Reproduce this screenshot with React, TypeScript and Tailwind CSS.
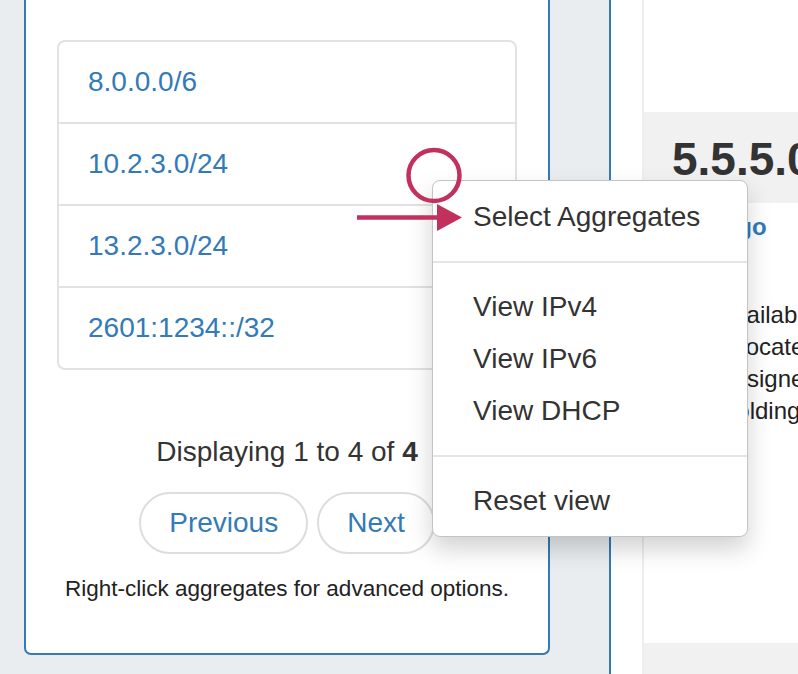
import React from "react";

const aggregates = ["8.0.0.0/6", "10.2.3.0/24", "13.2.3.0/24", "2601:1234::/32"];

const statuses = ["Available", "Allocated", "Assigned", "Holding"];

const MenuItem: React.FC<{ label: string }> = ({ label }) => (
  <div className="h-[52px] pl-[40px] flex items-center text-[28px] leading-[40px] text-[#333]">
    {label}
  </div>
);

const Divider = () => <div className="my-[18px] h-[2px] bg-[#e5e5e5]" />;

const App: React.FC = () => {
  return (
    <div className="relative w-[798px] h-[674px] overflow-hidden bg-[#e9edf0] flex font-['Liberation_Sans',Arial,sans-serif]">
      {/* left panel */}
      <div className="ml-[24px] w-[526px] h-[655px] shrink-0 bg-white border-2 border-t-0 border-[#337ab7] rounded-b-[7px] px-[31px] pt-[40px] flex flex-col items-center">
        <div className="w-full border-2 border-[#e2e2e2] rounded-[8px] divide-y-2 divide-[#e2e2e2]">
          {aggregates.map((a) => (
            <div key={a} className="box-content h-[80px] flex items-center px-[29px] text-[28px] text-[#337ab7]">
              {a}
            </div>
          ))}
        </div>

        <p className="mt-[62px] text-[28px] leading-[40px] text-[#333]">
          Displaying 1 to 4 of <b>4</b>
        </p>

        <div className="mt-[20px] flex gap-[9px]">
          <button className="border-2 border-[#ddd] rounded-full bg-white px-[28px] h-[62px] text-[28px] leading-[40px] text-[#337ab7]">
            Previous
          </button>
          <button className="border-2 border-[#ddd] rounded-full bg-white px-[28px] h-[62px] text-[28px] leading-[40px] text-[#337ab7]">
            Next
          </button>
        </div>

        <p className="mt-[19px] text-[22.5px] leading-[31px] text-[#222]">
          Right-click aggregates for advanced options.
        </p>
      </div>

      {/* right panel */}
      <div className="ml-[59px] flex-1 h-full bg-white border-l-2 border-[#337ab7] pl-[31px] flex">
        <div className="w-[300px] shrink-0 border-l-2 border-[#eeeeee] flex flex-col whitespace-nowrap">
          <div className="h-[112px] shrink-0" />
          <div className="h-[91px] shrink-0 bg-[#f1f1f1] pl-[28px] pt-[22px]">
            <h2 className="text-[46px] leading-[50px] font-bold text-[#333]">5.5.5.0/24</h2>
          </div>
          <div className="h-[440px] shrink-0 pl-[28px]">
            <a className="block mt-[8px] text-[24px] leading-[32px] font-bold text-[#337ab7]">Chicago</a>
            <div className="mt-[56px] pl-[47px] text-[24px] leading-[32px] text-[#222]">
              {statuses.map((s) => (
                <div key={s}>{s}</div>
              ))}
            </div>
          </div>
          <div className="flex-1 bg-[#f1f1f1] pl-[28px] pt-[22px]">
            <h2 className="text-[46px] leading-[50px] font-bold text-[#333]">7.8.8.0/24</h2>
          </div>
        </div>
      </div>

      {/* context menu */}
      <div className="absolute left-[432px] top-[180px] w-[316px] h-[357px] bg-white border border-[#c4c4c4] rounded-[8px] py-[10px] shadow-[0_12px_24px_rgba(0,0,0,0.18)]">
        <MenuItem label="Select Aggregates" />
        <Divider />
        <MenuItem label="View IPv4" />
        <MenuItem label="View IPv6" />
        <MenuItem label="View DHCP" />
        <Divider />
        <MenuItem label="Reset view" />
      </div>

      {/* annotation */}
      <svg className="absolute left-[340px] top-[140px]" width="140" height="100" viewBox="0 0 140 100">
        <circle cx="94" cy="35.5" r="25.5" fill="none" stroke="#c2315e" strokeWidth="4.5" />
        <line x1="17" y1="77.5" x2="100" y2="77.5" stroke="#c2315e" strokeWidth="4.5" />
        <polygon points="97,64 122,77.5 97,91" fill="#c2315e" />
      </svg>
    </div>
  );
};

export default App;
